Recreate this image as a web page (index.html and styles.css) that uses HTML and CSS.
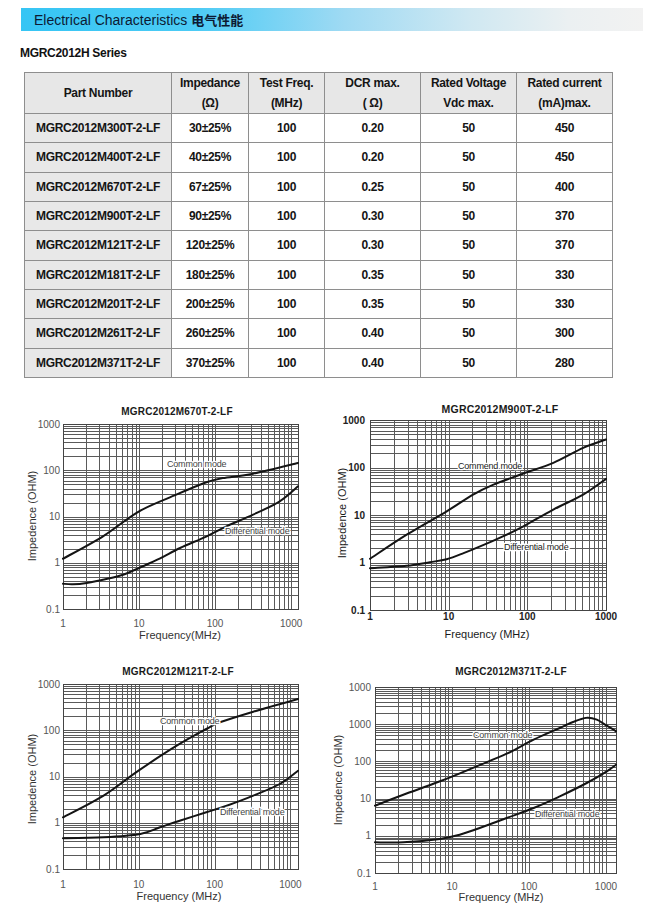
FILE: index.html
```html
<!DOCTYPE html>
<html lang="en">
<head>
<meta charset="utf-8">
<title>Electrical Characteristics</title>
<link rel="stylesheet" href="styles.css">
</head>
<body>
<div class="page">
  <div class="banner"><span>Electrical Characteristics</span> <span class="cjk">电气性能</span></div>
  <div class="series">MGRC2012H Series</div>
  <table class="spec">
    <colgroup>
      <col class="c-part"><col class="c-imp"><col class="c-freq"><col class="c-w"><col class="c-w"><col class="c-w">
    </colgroup>
    <thead>
      <tr>
        <th>Part Number</th>
        <th>Impedance<br>(Ω)</th>
        <th>Test Freq.<br>(MHz)</th>
        <th>DCR max.<br>( Ω)</th>
        <th>Rated Voltage<br>Vdc max.</th>
        <th>Rated current<br>(mA)max.</th>
      </tr>
    </thead>
    <tbody>
      <tr><td>MGRC2012M300T-2-LF</td><td>30±25%</td><td>100</td><td>0.20</td><td>50</td><td>450</td></tr>
      <tr><td>MGRC2012M400T-2-LF</td><td>40±25%</td><td>100</td><td>0.20</td><td>50</td><td>450</td></tr>
      <tr><td>MGRC2012M670T-2-LF</td><td>67±25%</td><td>100</td><td>0.25</td><td>50</td><td>400</td></tr>
      <tr><td>MGRC2012M900T-2-LF</td><td>90±25%</td><td>100</td><td>0.30</td><td>50</td><td>370</td></tr>
      <tr><td>MGRC2012M121T-2-LF</td><td>120±25%</td><td>100</td><td>0.30</td><td>50</td><td>370</td></tr>
      <tr><td>MGRC2012M181T-2-LF</td><td>180±25%</td><td>100</td><td>0.35</td><td>50</td><td>330</td></tr>
      <tr><td>MGRC2012M201T-2-LF</td><td>200±25%</td><td>100</td><td>0.35</td><td>50</td><td>330</td></tr>
      <tr><td>MGRC2012M261T-2-LF</td><td>260±25%</td><td>100</td><td>0.40</td><td>50</td><td>300</td></tr>
      <tr><td>MGRC2012M371T-2-LF</td><td>370±25%</td><td>100</td><td>0.40</td><td>50</td><td>280</td></tr>
    </tbody>
  </table>
  <div class="charts">
    <figure class="chart" data-chart="0"><svg></svg></figure>
    <figure class="chart" data-chart="1"><svg></svg></figure>
    <figure class="chart" data-chart="2"><svg></svg></figure>
    <figure class="chart" data-chart="3"><svg></svg></figure>
  </div>
</div>
<script src="charts.js"></script>
</body>
</html>
```

FILE: styles.css
```css
* { box-sizing: border-box; }
html, body { margin: 0; padding: 0; background: #fff; }
body {
  width: 646px;
  font-family: "Liberation Sans", Arial, "Noto Sans CJK SC", sans-serif;
  color: #111;
}
.page { padding-top: 8px; }

.banner {
  margin-left: 21px;
  width: 622px;
  height: 23px;
  padding-left: 13px;
  display: flex;
  align-items: center;
  gap: 4px;
  font-size: 14px;
  color: #0c1a33;
  background: linear-gradient(to right, #36c5f4 0%, #4ccbf5 28%, #9fdaf3 52%, #cfe8f2 72%, #ebf0f2 88%, #f2f2f2 100%);
}
.banner .cjk {
  font-family: "Noto Sans CJK SC", sans-serif;
  font-weight: bold;
  font-size: 13px;
}

.series {
  margin: 15px 0 0 20px;
  font-size: 12px;
  line-height: 14px;
  font-weight: bold;
  letter-spacing: -0.3px;
}

.spec {
  margin: 12px 0 0 24px;
  width: 588px;
  border-collapse: collapse;
  table-layout: fixed;
}
.spec .c-part { width: 147px; }
.spec .c-imp { width: 77px; }
.spec .c-freq { width: 76px; }
.spec .c-w { width: 96px; }
.spec th, .spec td {
  border: 1px solid #8e8e8e;
  padding: 0;
  text-align: center;
  font-size: 12px;
  font-weight: bold;
  letter-spacing: -0.3px;
  color: #151515;
}
.spec thead th {
  height: 41px;
  line-height: 20px;
  background: #e7e7e7;
}
.spec tbody td {
  height: 29.33px;
  background: #fff;
}
.spec tbody td:first-child { background: #e8e8e8; }

.charts {
  margin: 18px 0 0 20px;
  display: grid;
  grid-template-columns: 300px 326px;
  grid-template-rows: 260px 261px;
}
.chart { margin: 0; }
.chart svg { display: block; }

.grid line { stroke: #5a5a5a; stroke-width: 1; shape-rendering: crispEdges; }
.frame { fill: none; stroke: #444; stroke-width: 1; shape-rendering: crispEdges; }
.curve { fill: none; stroke: #141414; stroke-width: 2; stroke-linejoin: round; stroke-linecap: round; }
.ct { font: bold 10px "Liberation Sans", Arial, sans-serif; fill: #1a1a1a; letter-spacing: 0.2px; }
.ax { font: 10px "Liberation Sans", Arial, sans-serif; fill: #555; }
.at { font: 11px "Liberation Sans", Arial, sans-serif; fill: #333; }
.mode { font: 9px "Liberation Sans", Arial, sans-serif; fill: #444; stroke: #fff; stroke-width: 2.5px; paint-order: stroke; letter-spacing: -0.2px; }
.dark .ax { fill: #222; font-weight: bold; }
.dark .at { fill: #1a1a1a; }
.dark .mode { fill: #1a1a1a; }
.dark .ct { font-size: 10.5px; }
```

FILE: charts.js
```js
(function () {
  var NS = 'http://www.w3.org/2000/svg';
  function el(tag, attrs, text) {
    var e = document.createElementNS(NS, tag);
    for (var k in attrs) e.setAttribute(k, attrs[k]);
    if (text != null) e.textContent = text;
    return e;
  }

  var charts = [
    {
      w: 300, h: 260, px0: 43, px1: 278, py0: 28, py1: 213, lfMax: 3.09, lzMin: -1, lzMax: 3,
      ylabels: ['1000', '100', '10', '1', '0.1'], ylx: 40,
      title: 'MGRC2012M670T-2-LF', tx: 157, ty: 19,
      xly: 231, freq: 'Frequency(MHz)', fx: 160, fy: 243, atx: 12, aty: 120, dark: false,
      common: [[0, 0.088], [0.526, 0.571], [1, 1.112], [1.49, 1.472], [1.886, 1.739], [2.1, 1.83], [2.5, 1.926], [3.09, 2.157]],
      diff: [[0, -0.452], [0.13, -0.467], [0.31, -0.438], [0.57, -0.351], [0.79, -0.258], [1, -0.113], [1.27, 0.088], [1.54, 0.319], [1.89, 0.571], [2.15, 0.787], [2.5, 1.04], [2.85, 1.328], [3.09, 1.652]],
      cm: [147, 71, 'Common mode'], dm: [205, 138, 'Differential mode']
    },
    {
      w: 326, h: 260, px0: 50, px1: 286, py0: 24, py1: 214, lfMax: 3, lzMin: -1, lzMax: 3,
      ylabels: ['1000', '100', '10', '1', '0.1'], ylx: 45,
      title: 'MGRC2012M900T-2-LF', tx: 180, ty: 17,
      xly: 224, freq: 'Frequency (MHz)', fx: 167, fy: 242, atx: 22, aty: 117, dark: true,
      common: [[0, 0.077], [0.466, 0.585], [0.975, 1.077], [1.31, 1.43], [1.57, 1.64], [1.95, 1.873], [2.33, 2.099], [2.71, 2.415], [3, 2.59]],
      diff: [[0, -0.12], [0.466, -0.07], [0.76, 0.007], [0.975, 0.07], [1.19, 0.197], [1.4, 0.338], [1.69, 0.549], [1.95, 0.76], [2.33, 1.113], [2.71, 1.43], [3, 1.76]],
      cm: [138, 73, 'Commend mode'], dm: [184, 154, 'Differential mode']
    },
    {
      w: 300, h: 261, px0: 43, px1: 278, py0: 28, py1: 213, lfMax: 3.1, lzMin: -1, lzMax: 3,
      ylabels: ['1000', '100', '10', '1', '0.1'], ylx: 40,
      title: 'MGRC2012M121T-2-LF', tx: 158, ty: 19,
      xly: 232, freq: 'Frequency (MHz)', fx: 159, fy: 244, atx: 12, aty: 123, dark: false,
      common: [[0, 0.117], [0.535, 0.586], [0.996, 1.126], [1.5, 1.667], [1.89, 2.027], [2.07, 2.171], [2.51, 2.402], [3.1, 2.676]],
      diff: [[0, -0.337], [0.535, -0.315], [1.02, -0.243], [1.28, -0.099], [1.54, 0.045], [1.89, 0.225], [2.16, 0.369], [2.51, 0.586], [2.86, 0.838], [3.1, 1.126]],
      cm: [140, 68, 'Common mode'], dm: [200, 159, 'Differential mode']
    },
    {
      w: 326, h: 261, px0: 55, px1: 296, py0: 31, py1: 217, lfMax: 3.13, lzMin: -1, lzMax: 4,
      ylabels: ['1000', '1000', '100', '10', '1', '0.1'], ylx: 51,
      title: 'MGRC2012M371T-2-LF', tx: 191, ty: 19,
      xly: 234, freq: 'Frequency (MHz)', fx: 181, fy: 245, atx: 18, aty: 124, dark: false,
      common: [[0, 0.81], [0.368, 1.106], [0.844, 1.464], [1.32, 1.867], [1.71, 2.208], [2.06, 2.584], [2.4, 2.898], [2.58, 3.068], [2.75, 3.176], [2.88, 3.122], [3.01, 2.96], [3.13, 2.81]],
      diff: [[0, -0.176], [0.368, -0.176], [0.844, -0.086], [1.1, 0.03], [1.36, 0.21], [1.71, 0.478], [2.06, 0.747], [2.4, 1.06], [2.75, 1.419], [3.01, 1.733], [3.13, 1.91]],
      cm: [153, 82, 'Common mode'], dm: [215, 161, 'Differential mode']
    }
  ];

  charts.forEach(function (c, i) {
    var fig = document.querySelector('[data-chart="' + i + '"]');
    var svg = fig.querySelector('svg');
    svg.setAttribute('width', c.w);
    svg.setAttribute('height', c.h);
    svg.setAttribute('viewBox', '0 0 ' + c.w + ' ' + c.h);
    if (c.dark) svg.setAttribute('class', 'dark');

    var dw = (c.px1 - c.px0) / c.lfMax;
    var fx = function (lf) { return c.px0 + dw * lf; };
    var fy = function (lz) { return c.py1 - (c.py1 - c.py0) * (lz - c.lzMin) / (c.lzMax - c.lzMin); };

    var g = el('g', { 'class': 'grid' });
    for (var d = c.lzMin; d < c.lzMax; d++) {
      for (var k = 1; k <= 9; k++) {
        var y = Math.round(fy(d + Math.log10(k))) + 0.5;
        g.appendChild(el('line', { x1: c.px0, x2: c.px1, y1: y, y2: y }));
      }
    }
    for (var d2 = 0; d2 <= Math.ceil(c.lfMax); d2++) {
      for (var k2 = 1; k2 <= 9; k2++) {
        var lf = d2 + Math.log10(k2);
        if (lf > c.lfMax + 1e-6) continue;
        var x = Math.round(fx(lf)) + 0.5;
        g.appendChild(el('line', { x1: x, x2: x, y1: c.py0, y2: c.py1 }));
      }
    }
    svg.appendChild(g);
    svg.appendChild(el('rect', { 'class': 'frame', x: c.px0 + 0.5, y: c.py0 + 0.5, width: c.px1 - c.px0, height: c.py1 - c.py0 }));

    function path(pts) {
      var p = pts.map(function (q) { return [fx(q[0]), fy(q[1])]; });
      var d = 'M' + p[0][0].toFixed(1) + ' ' + p[0][1].toFixed(1);
      for (var j = 0; j < p.length - 1; j++) {
        var p0 = p[j - 1] || p[j], p1 = p[j], p2 = p[j + 1], p3 = p[j + 2] || p2;
        var c1x = p1[0] + (p2[0] - p0[0]) / 6, c1y = p1[1] + (p2[1] - p0[1]) / 6;
        var c2x = p2[0] - (p3[0] - p1[0]) / 6, c2y = p2[1] - (p3[1] - p1[1]) / 6;
        d += ' C' + c1x.toFixed(1) + ' ' + c1y.toFixed(1) + ' ' + c2x.toFixed(1) + ' ' + c2y.toFixed(1) + ' ' + p2[0].toFixed(1) + ' ' + p2[1].toFixed(1);
      }
      return d;
    }
    svg.appendChild(el('path', { 'class': 'curve', d: path(c.common) }));
    svg.appendChild(el('path', { 'class': 'curve', d: path(c.diff) }));

    svg.appendChild(el('text', { 'class': 'mode', x: c.cm[0], y: c.cm[1] }, c.cm[2]));
    svg.appendChild(el('text', { 'class': 'mode', x: c.dm[0], y: c.dm[1] }, c.dm[2]));

    svg.appendChild(el('text', { 'class': 'ct', x: c.tx, y: c.ty, 'text-anchor': 'middle' }, c.title));

    c.ylabels.forEach(function (t, j) {
      var lz = c.lzMax - j;
      svg.appendChild(el('text', { 'class': 'ax', x: c.ylx, y: fy(lz) + 3.5, 'text-anchor': 'end' }, t));
    });
    ['1', '10', '100', '1000'].forEach(function (t, j) {
      svg.appendChild(el('text', { 'class': 'ax', x: fx(j), y: c.xly, 'text-anchor': 'middle' }, t));
    });
    svg.appendChild(el('text', { 'class': 'at', x: c.fx, y: c.fy, 'text-anchor': 'middle' }, c.freq));
    svg.appendChild(el('text', { 'class': 'at', x: c.atx, y: c.aty, 'text-anchor': 'middle', 'dominant-baseline': 'central', transform: 'rotate(-90 ' + c.atx + ' ' + c.aty + ')' }, 'Impedence  (OHM)'));
  });
})();
```
